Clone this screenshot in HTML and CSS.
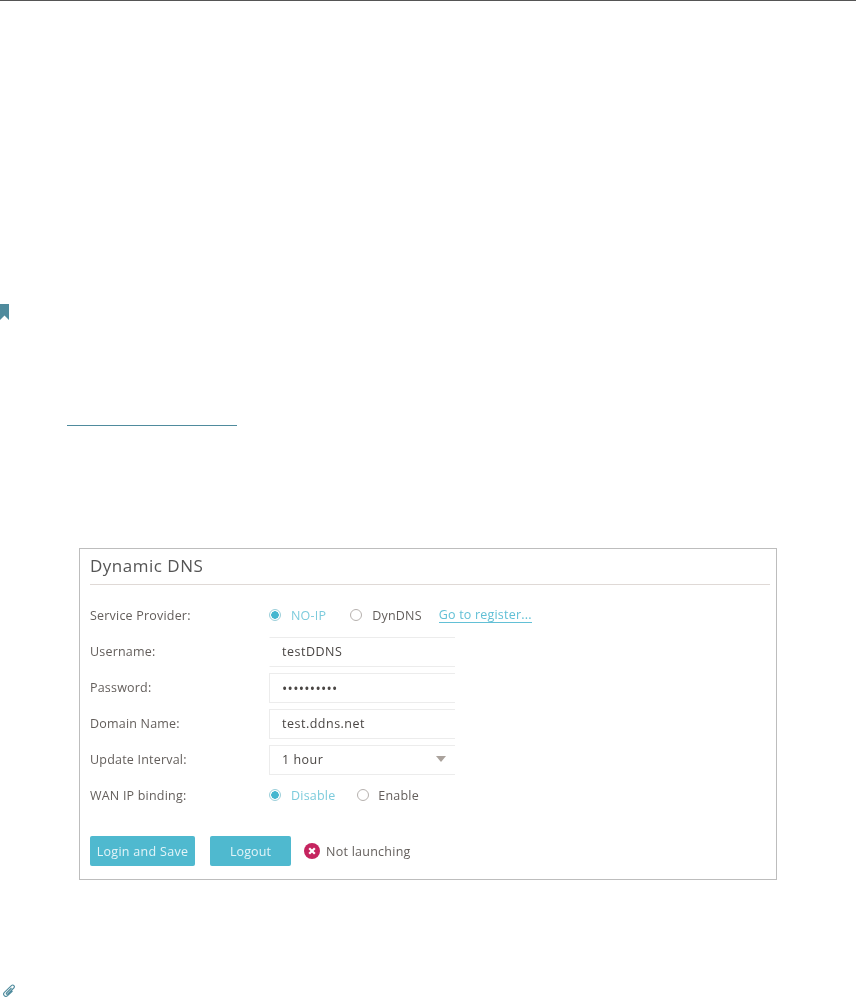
FILE: index.html
```html
<!DOCTYPE html>
<html lang="en">

<head>
    <meta charset="UTF-8">
    <meta name="viewport" content="width=device-width, initial-scale=1.0">
    <title>Dynamic DNS</title>
    <link rel="stylesheet" href="styles.css">
</head>

<body>
    <div class="page">
        <svg class="bookmark" width="9" height="16" viewBox="0 0 9 16">
            <path d="M0 0H9V16L4.5 11.5L0 16Z" fill="#4f8b9d" />
        </svg>
        <div class="link-line"></div>

        <main class="panel">
            <h1 class="title">Dynamic DNS</h1>

            <div class="row row-first">
                <div class="label">Service Provider:</div>
                <div class="radios">
                    <span class="radio checked"></span>
                    <span class="on">NO-IP</span>
                    <span class="radio second"></span>
                    <span>DynDNS</span>
                    <a class="register">Go to register...</a>
                </div>
            </div>

            <div class="row">
                <div class="label">Username:</div>
                <div class="field no-left">testDDNS</div>
            </div>
            <div class="row">
                <div class="label">Password:</div>
                <div class="field dots">••••••••••</div>
            </div>
            <div class="row">
                <div class="label">Domain Name:</div>
                <div class="field">test.ddns.net</div>
            </div>
            <div class="row">
                <div class="label">Update Interval:</div>
                <div class="field select">1 hour<span class="arrow"></span></div>
            </div>

            <div class="row">
                <div class="label">WAN IP binding:</div>
                <div class="radios radios-wan">
                    <span class="radio checked"></span>
                    <span class="on">Disable</span>
                    <span class="radio second"></span>
                    <span>Enable</span>
                </div>
            </div>

            <div class="actions">
                <div class="btn btn-save">Login and Save</div>
                <div class="btn btn-logout">Logout</div>
                <svg class="status-icon" width="16" height="16" viewBox="0 0 16 16">
                    <circle cx="8" cy="8" r="8" fill="#c5245f" />
                    <path d="M5.2 5.2L10.8 10.8M10.8 5.2L5.2 10.8" stroke="#fff" stroke-width="2.2" />
                </svg>
                <span class="status">Not launching</span>
            </div>
        </main>

        <svg class="clip" width="14" height="13" viewBox="0 0 14 13">
            <path d="M9.5 4L4.5 9C3.8 9.8 4.9 10.8 5.6 10.1L11.8 4C13.4 2.4 11.2 -.1 9.4 1.6L2.4 8.4C.2 10.6 3.2 13.8 5.6 11.6L10.5 7" fill="none" stroke="#4f8b9d" stroke-width="1.1" />
        </svg>
    </div>
</body>

</html>
```

FILE: styles.css
```css
* {
    margin: 0;
    padding: 0;
    box-sizing: border-box;
}

body {
    background: #fff;
    font-family: "Open Sans", "Liberation Sans", sans-serif;
    font-size: 12.5px;
    color: #635e5b;
}

.page {
    height: 999px;
    overflow: hidden;
    border-top: 1px solid #555;
}

.bookmark {
    display: block;
    margin-top: 303px;
}

.link-line {
    width: 170px;
    height: 1px;
    margin: 105px 0 0 67px;
    background: #4f8b9d;
}

.panel {
    width: 698px;
    height: 332px;
    margin: 122px 0 0 79px;
    padding: 0 6px 0 10px;
    border: 1px solid #bdbdbd;
    filter: blur(.4px);
}

.title {
    height: 36px;
    padding-top: 5px;
    border-bottom: 1px solid #dfd9d6;
    font-size: 17px;
    font-weight: 400;
    line-height: 24px;
    letter-spacing: .5px;
    color: #555;
}

.row {
    display: flex;
    align-items: center;
    height: 30px;
    margin-bottom: 6px;
}

.row-first {
    margin-top: 15px;
}

.label {
    width: 179px;
    letter-spacing: .2px;
}

.radios {
    display: flex;
    align-items: center;
    letter-spacing: .2px;
}

.radio {
    width: 12px;
    height: 12px;
    margin-right: 10px;
    border: 1px solid #b5b0ad;
    border-radius: 50%;
    background: #fff;
}

.second {
    margin-left: 24px;
}

.radios-wan .second {
    margin-left: 22px;
    margin-right: 9px;
}

.checked {
    border-color: #9ccfda;
    background: radial-gradient(circle, #45b6cf 3.5px, #fff 4px);
}

.on {
    color: #7ccbdc;
}

.register {
    margin-left: 17px;
    border-bottom: 1px solid #62c0d6;
    line-height: 15px;
    color: #62c0d6;
}

.field {
    display: flex;
    align-items: center;
    position: relative;
    width: 186px;
    height: 30px;
    margin: 1px 0 -1px;
    padding: 0 0 2px 12px;
    border: 1px solid #ececec;
    border-right: 0;
    color: #4a4644;
    letter-spacing: .5px;
}

.no-left {
    border-left-color: #fff;
}

.dots {
    padding-bottom: 0;
    font-size: 14px;
    letter-spacing: .3px;
}

.arrow {
    position: absolute;
    top: 10px;
    right: 9px;
    border: 5.5px solid transparent;
    border-top: 6px solid #aaa29c;
    border-bottom: 0;
}

.actions {
    display: flex;
    align-items: center;
    margin-top: 26px;
}

.btn {
    display: flex;
    align-items: center;
    justify-content: center;
    height: 30px;
    border-radius: 2px;
    background: #4fb9cf;
    color: #e3f4f8;
    letter-spacing: .3px;
}

.btn-save {
    width: 105px;
}

.btn-logout {
    width: 81px;
    margin-left: 15px;
    letter-spacing: .1px;
}

.status-icon {
    margin-left: 13px;
}

.status {
    margin-left: 6px;
    letter-spacing: .25px;
}

.clip {
    display: block;
    margin: 104px 0 0 2px;
}
```
